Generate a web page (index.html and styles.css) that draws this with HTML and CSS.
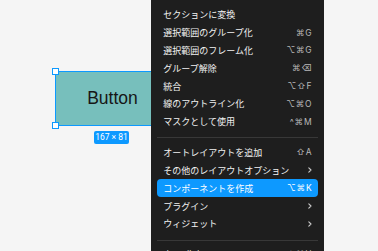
FILE: index.html
```html
<!DOCTYPE html>
<html lang="ja">
<head>
<meta charset="utf-8">
<title>Figma context menu</title>
<link rel="stylesheet" href="styles.css">
</head>
<body>
<div class="canvas">
  <div class="frame">
    <div class="frame-box">Button</div>
    <span class="handle handle-tl"></span>
    <span class="handle handle-bl"></span>
    <div class="size-label">167 × 81</div>
  </div>

  <div class="menu">
    <div class="item"><span class="label">セクションに変換</span></div>
    <div class="item"><span class="label">選択範囲のグループ化</span><span class="key">⌘G</span></div>
    <div class="item"><span class="label">選択範囲のフレーム化</span><span class="key">⌥⌘G</span></div>
    <div class="item"><span class="label">グループ解除</span><span class="key">⌘⌫</span></div>
    <div class="item"><span class="label">統合</span><span class="key">⌥⇧F</span></div>
    <div class="item"><span class="label">線のアウトライン化</span><span class="key">⌥⌘O</span></div>
    <div class="item"><span class="label">マスクとして使用</span><span class="key">^⌘M</span></div>
    <div class="sep"></div>
    <div class="item"><span class="label">オートレイアウトを追加</span><span class="key">⇧A</span></div>
    <div class="item"><span class="label">その他のレイアウトオプション</span><svg class="chev" viewBox="0 0 4 6"><polyline points="0.8,0.8 3,3 0.8,5.2"/></svg></div>
    <div class="item active"><span class="label">コンポーネントを作成</span><span class="key">⌥⌘K</span></div>
    <div class="item"><span class="label">プラグイン</span><svg class="chev" viewBox="0 0 4 6"><polyline points="0.8,0.8 3,3 0.8,5.2"/></svg></div>
    <div class="item"><span class="label">ウィジェット</span><svg class="chev" viewBox="0 0 4 6"><polyline points="0.8,0.8 3,3 0.8,5.2"/></svg></div>
    <div class="sep"></div>
    <div class="item"><span class="label">表示/非表示</span><span class="key">⇧⌘H</span></div>
  </div>
</div>
</body>
</html>
```
FILE: styles.css
```css
* { box-sizing: border-box; }
html, body {
  margin: 0;
  padding: 0;
  width: 378px;
  height: 251px;
  overflow: hidden;
  background: #f5f5f5;
}
.canvas {
  position: relative;
  width: 378px;
  height: 251px;
  overflow: hidden;
  background: #f5f5f5;
  font-family: "Noto Sans CJK JP", "Noto Sans", sans-serif;
}

/* selected frame on the canvas */
.frame {
  position: absolute;
  left: 0;
  top: 0;
}
.frame-box {
  position: absolute;
  left: 55px;
  top: 71px;
  width: 115px;
  height: 55px;
  background: #77bfbc;
  border: 1px solid #0d99ff;
  display: flex;
  align-items: center;
  justify-content: center;
  font-family: "Liberation Sans", Arial, sans-serif;
  font-size: 17.5px;
  color: #161616;
}
.handle {
  position: absolute;
  width: 7px;
  height: 7px;
  background: #ffffff;
  border: 1px solid #0d99ff;
}
.handle-tl { left: 52px; top: 68px; }
.handle-bl { left: 52px; top: 122px; }
.size-label {
  position: absolute;
  left: 94px;
  top: 131px;
  width: 35px;
  height: 13px;
  background: #0d99ff;
  border-radius: 2px;
  color: #ffffff;
  font-family: Roboto, "Liberation Sans", sans-serif;
  font-size: 8.5px;
  line-height: 13px;
  text-align: center;
  white-space: nowrap;
}

/* context menu */
.menu {
  position: absolute;
  left: 151px;
  top: 0;
  width: 172.5px;
  height: 270px;
  background: #1e1e1e;
  padding: 6.1px 5.3px 0 5.7px;
  display: flex;
  flex-direction: column;
}
.item {
  height: 17.8px;
  flex: none;
  display: flex;
  align-items: center;
  justify-content: space-between;
  padding: 0 6.6px;
  border-radius: 4px;
  color: #f2f2f2;
  font-size: 9px;
  line-height: 1;
}
.item .label {
  white-space: nowrap;
}
.key {
  font-family: Inter, "DejaVu Sans", sans-serif;
  font-size: 8.5px;
  color: #b9b9b9;
  letter-spacing: 0.8px;
  margin-right: -0.8px;
  white-space: nowrap;
}
.item.active {
  background: #0d99ff;
  color: #ffffff;
}
.item.active .key {
  color: #ffffff;
}
.chev {
  width: 4px;
  height: 6px;
  fill: none;
  stroke: #c8c8c8;
  stroke-width: 1.1;
  stroke-linecap: round;
  stroke-linejoin: round;
}
.sep {
  flex: none;
  height: 1px;
  margin: 6.8px 0 5.3px;
  background: #383838;
}
```
